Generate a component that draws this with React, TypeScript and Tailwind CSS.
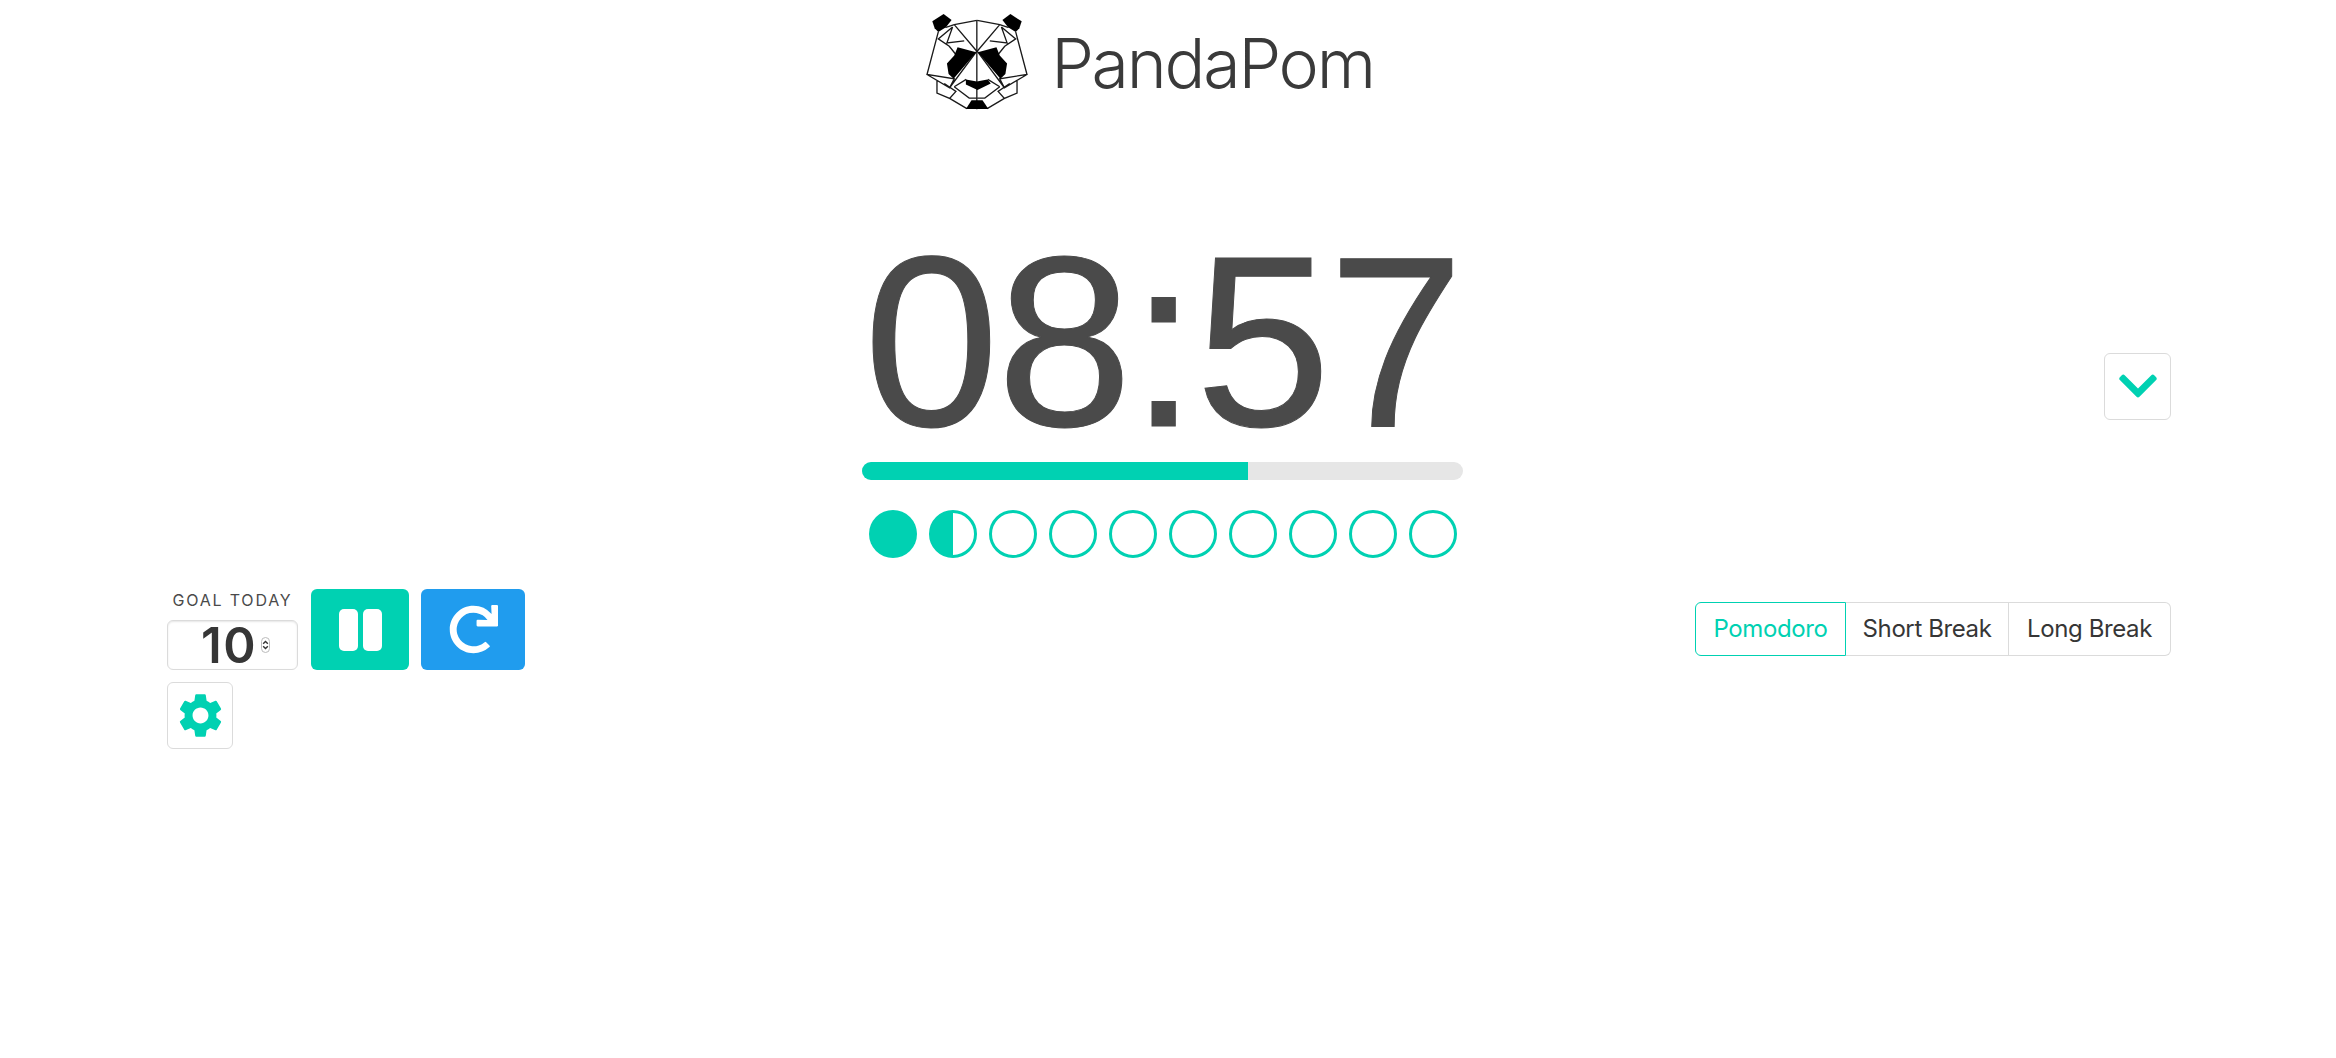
import { FaChevronDown, FaRedo } from 'react-icons/fa'
import { MdSettings } from 'react-icons/md'

const PandaHalf = () => (
  <>
    <path d="M94 65L128 43L152 61L135 83L112 97L101 86Z" fill="#000" stroke="none" />
    <path d="M228 62L160 75L135 83M112 97L78 225L160 238L146 265L78 225M160 75L228 155M155 82L138 130L190 124M155 82L112 118L145 140L165 165M108 245L108 281L146 297L165 276L130 252M146 297L198 328M146 265L228 155M160 262L205 296L228 296M160 262L196 240" fill="none" stroke="#1a1a1a" strokeWidth="4" />
    <path d="M170 143L226 158L158 238L143 224L138 192L160 168Z" fill="#000" />
  </>
)

const PandaLogo = () => (
  <svg viewBox="75 40 310 292" className="h-[97px] w-[103px] shrink-0">
    <PandaHalf />
    <g transform="translate(457 0) scale(-1 1)">
      <PandaHalf />
    </g>
    <path d="M228 62V330" fill="none" stroke="#1a1a1a" strokeWidth="4" />
    <path d="M195 240L228 246L260 240L270 252L230 272L195 255Z" fill="#000" />
    <path d="M212 303L245 303L263 329L195 329Z" fill="#000" />
  </svg>
)

const dots = ['full', 'half', 'empty', 'empty', 'empty', 'empty', 'empty', 'empty', 'empty', 'empty']

export default function App() {
  return (
    <div className="min-h-[1058px] bg-white pl-[167px] pr-[165px] font-['Inter',sans-serif]">
      <header className="flex h-[124px] items-start justify-center pr-[38px] pt-[13px]">
        <PandaLogo />
        <h1 className="ml-[22px] mt-[15px] text-[68px] font-light leading-[70px] tracking-[-2.2px] text-[#3a3a3a]">PandaPom</h1>
      </header>

      <div className="grid grid-cols-[695px_601px_1fr]">
        <div />
        <div>
          <div className="mt-[96px] whitespace-nowrap text-center font-['Liberation_Sans',sans-serif] text-[244px] leading-none tracking-[-2.5px] text-[#4a4a4a] [-webkit-text-stroke:1px_#4a4a4a]">
            08:57
          </div>
          <div className="-mt-[2px] h-[18px] overflow-hidden rounded-[9px] bg-[#e6e6e6]">
            <div className="h-full w-[386px] bg-[#00d1b2]" />
          </div>
          <div className="mt-[30px] flex justify-center gap-3">
            {dots.map((d, i) =>
              d === 'full' ? (
                <div key={i} className="size-12 rounded-full bg-[#00d1b2]" />
              ) : d === 'half' ? (
                <div key={i} className="size-12 rounded-full border-[3px] border-[#00d1b2] bg-[linear-gradient(90deg,#00d1b2_50%,#fff_50%)]" />
              ) : (
                <div key={i} className="size-12 rounded-full border-[3px] border-[#00d1b2]" />
              ),
            )}
          </div>
        </div>
        <div className="flex justify-end">
          <button className="mt-[229px] flex h-[67px] w-[67px] items-center justify-center rounded-md border border-[#dbdbdb] bg-white text-[#00d1b2]">
            <FaChevronDown className="mb-[2px] size-[44px]" />
          </button>
        </div>
      </div>

      <div className="mt-[31px] flex items-start justify-between">
        <div className="w-[358px]">
          <div className="flex items-start">
            <div className="w-[131px]">
              <div className="h-[31px] whitespace-nowrap pt-[1px] text-center text-[16px] leading-[20px] tracking-[1.8px] text-[#4a4a4a]">GOAL TODAY</div>
              <div className="flex h-[50px] items-center justify-center rounded-md border border-[#dbdbdb] pl-[6px] shadow-[inset_0_1px_2px_rgba(10,10,10,0.1)]">
                <span className="text-[49px] font-semibold leading-none tracking-[1.5px] text-[#363636]">10</span>
                <span className="ml-[4px] flex h-[16px] w-[9px] flex-col items-center justify-center rounded-full border border-[#bbbbbb]">
                  <svg viewBox="0 0 6 10" className="h-[12px] w-[7px]">
                    <path d="M1 4L3 2L5 4M1 6L3 8L5 6" fill="none" stroke="#333" strokeWidth="1.2" />
                  </svg>
                </span>
              </div>
            </div>
            <button className="ml-[13px] flex h-[81px] w-[98px] items-center justify-center gap-[5px] rounded-md bg-[#00d1b2]">
              <span className="h-[42px] w-[19px] rounded-[5px] bg-white" />
              <span className="h-[42px] w-[19px] rounded-[5px] bg-white" />
            </button>
            <button className="ml-[12px] flex h-[81px] w-[104px] items-center justify-center rounded-md bg-[#209cee] text-white">
              <FaRedo className="size-[49px]" />
            </button>
          </div>
          <button className="mt-[12px] flex h-[67px] w-[66px] items-center justify-center rounded-md border border-[#dbdbdb] bg-white text-[#00d1b2]">
            <MdSettings className="size-[53px]" />
          </button>
        </div>

        <div className="mt-[13px] flex h-[54px] text-[24px] leading-none tracking-[-0.4px] text-[#363636]">
          <div className="flex w-[151px] items-center justify-center rounded-l-md border border-[#00d1b2] text-[#00d1b2]">Pomodoro</div>
          <div className="flex w-[163px] items-center justify-center border-y border-r border-[#dbdbdb]">Short Break</div>
          <div className="flex w-[162px] items-center justify-center rounded-r-md border-y border-r border-[#dbdbdb]">Long Break</div>
        </div>
      </div>
    </div>
  )
}
